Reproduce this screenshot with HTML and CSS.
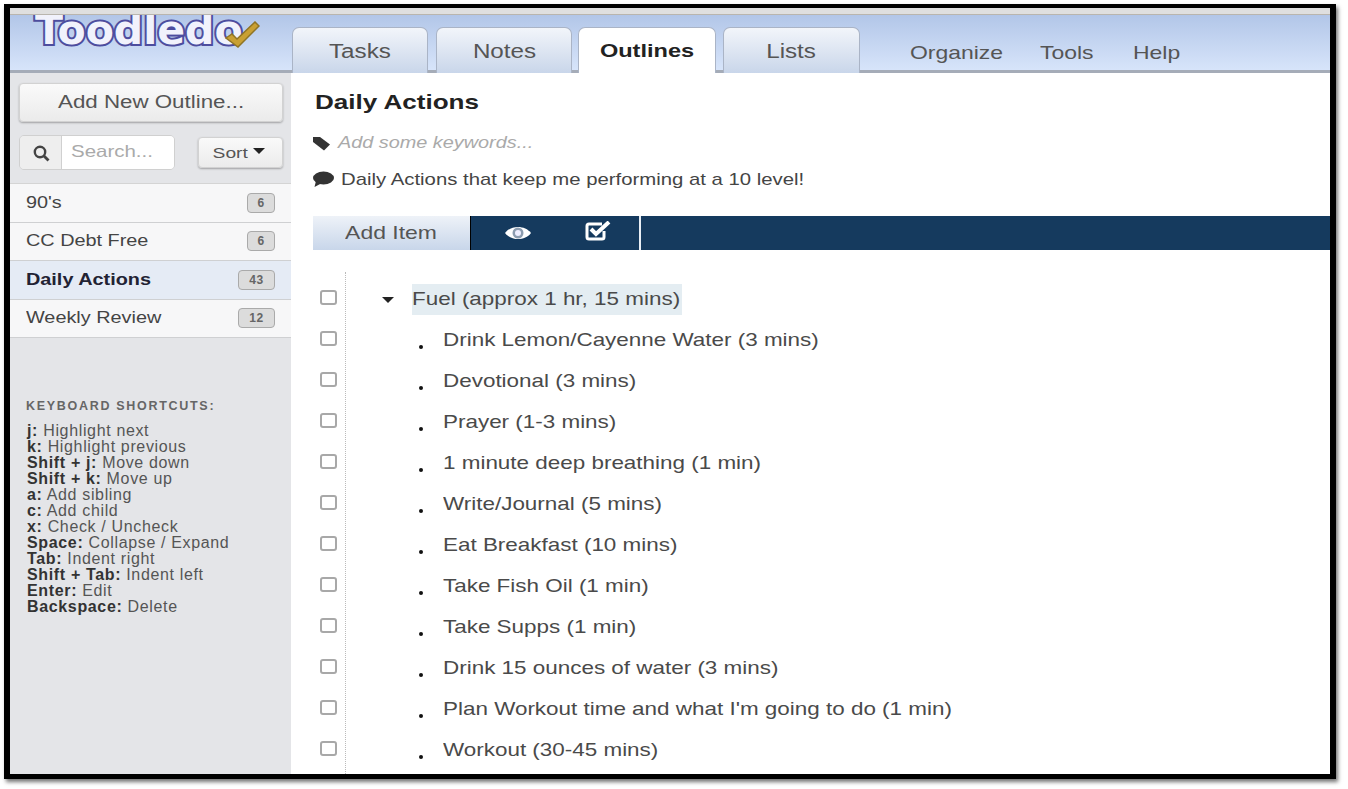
FILE: index.html
```html
<!DOCTYPE html>
<html lang="en">
<head>
<meta charset="utf-8">
<title>Toodledo Outlines</title>
<link rel="stylesheet" href="styles.css">
</head>
<body>
<div class="frame">
  <div class="strip"></div>
  <header class="topbar">
    <div class="logo">
      <span class="logo-text">Toodledo</span>
      <svg class="logo-check" width="36" height="30" viewBox="0 0 36 30"><path d="M2 17 L8 13 L13 18 L31 1 L35 5 L14 26 Z" fill="#c9a033" stroke="#8f7426" stroke-width="1.5"/></svg>
    </div>
    <nav class="tabs">
      <a class="tab tab-tasks"><span class="wide-c">Tasks</span></a>
      <a class="tab tab-notes"><span class="wide-c">Notes</span></a>
      <a class="tab tab-outlines active"><span class="wide-c">Outlines</span></a>
      <a class="tab tab-lists"><span class="wide-c">Lists</span></a>
    </nav>
    <nav class="menu">
      <a class="menu-organize"><span class="wide">Organize</span></a>
      <a class="menu-tools"><span class="wide">Tools</span></a>
      <a class="menu-help"><span class="wide">Help</span></a>
    </nav>
  </header>
  <div class="body">
    <aside class="side">
      <button class="btn add-btn"><span class="wide-c">Add New Outline...</span></button>
      <div class="search-row">
        <div class="search">
          <span class="search-icon"><svg width="18" height="18" viewBox="0 0 18 18"><circle cx="8" cy="8" r="5.2" fill="none" stroke="#444" stroke-width="2.4"/><path d="M12 12 L16.5 16.5" stroke="#444" stroke-width="2.8"/></svg></span>
          <span class="search-input"><span class="wide">Search...</span></span>
        </div>
        <button class="btn sort-btn"><span class="wide-c">Sort</span><i class="caret"></i></button>
      </div>
      <ul class="lists">
        <li class="list-row"><span class="wide">90's</span><b class="badge">6</b></li>
        <li class="list-row"><span class="wide">CC Debt Free</span><b class="badge">6</b></li>
        <li class="list-row current"><span class="wide">Daily Actions</span><b class="badge badge-2">43</b></li>
        <li class="list-row"><span class="wide">Weekly Review</span><b class="badge badge-2">12</b></li>
      </ul>
      <div class="shortcuts">
        <h4>KEYBOARD SHORTCUTS:</h4>
        <p><b>j:</b> Highlight next</p>
        <p><b>k:</b> Highlight previous</p>
        <p><b>Shift + j:</b> Move down</p>
        <p><b>Shift + k:</b> Move up</p>
        <p><b>a:</b> Add sibling</p>
        <p><b>c:</b> Add child</p>
        <p><b>x:</b> Check / Uncheck</p>
        <p><b>Space:</b> Collapse / Expand</p>
        <p><b>Tab:</b> Indent right</p>
        <p><b>Shift + Tab:</b> Indent left</p>
        <p><b>Enter:</b> Edit</p>
        <p><b>Backspace:</b> Delete</p>
      </div>
    </aside>
    <main class="main">
      <h1><span class="wide">Daily Actions</span></h1>
      <div class="keywords">
        <svg width="18" height="15" viewBox="0 0 18 15"><path d="M0 1 H7 L17 8.5 L11 14.5 L0 6 Z" fill="#333"/></svg>
        <span class="wide">Add some keywords...</span>
      </div>
      <div class="note">
        <svg width="21" height="16" viewBox="0 0 21 16"><ellipse cx="10.5" cy="7" rx="10.5" ry="6.5" fill="#333"/><path d="M3 10 L1.5 16 L9 12 Z" fill="#333"/></svg>
        <span class="wide">Daily Actions that keep me performing at a 10 level!</span>
      </div>
      <div class="toolbar">
        <div class="add-item"><span class="wide-c">Add Item</span></div>
        <div class="tool-icons">
          <svg width="28" height="18" viewBox="0 0 28 18"><path d="M1 9 C7 1 21 1 27 9 C21 17 7 17 1 9 Z" fill="#fff"/><circle cx="14" cy="9" r="5.5" fill="#8d9db0"/><circle cx="14" cy="9" r="3" fill="#eef"/></svg>
          <svg class="check-icon" width="28" height="20" viewBox="0 0 28 20"><path d="M20 10 V16 Q20 18 18 18 H5 Q3 18 3 16 V5 Q3 3 5 3 H18" fill="none" stroke="#fff" stroke-width="3"/><path d="M7 8 L12 13 L25 1" fill="none" stroke="#fff" stroke-width="4"/></svg>
        </div>
      </div>
      <div class="outline">
        <div class="row parent"><i class="check"></i><i class="arrow"></i><span class="fuel"><span class="wide">Fuel (approx 1 hr, 15 mins)</span></span></div>
        <div class="row"><i class="check"></i><i class="dot"></i><span class="wide">Drink Lemon/Cayenne Water (3 mins)</span></div>
        <div class="row"><i class="check"></i><i class="dot"></i><span class="wide">Devotional (3 mins)</span></div>
        <div class="row"><i class="check"></i><i class="dot"></i><span class="wide">Prayer (1-3 mins)</span></div>
        <div class="row"><i class="check"></i><i class="dot"></i><span class="wide">1 minute deep breathing (1 min)</span></div>
        <div class="row"><i class="check"></i><i class="dot"></i><span class="wide">Write/Journal (5 mins)</span></div>
        <div class="row"><i class="check"></i><i class="dot"></i><span class="wide">Eat Breakfast (10 mins)</span></div>
        <div class="row"><i class="check"></i><i class="dot"></i><span class="wide">Take Fish Oil (1 min)</span></div>
        <div class="row"><i class="check"></i><i class="dot"></i><span class="wide">Take Supps (1 min)</span></div>
        <div class="row"><i class="check"></i><i class="dot"></i><span class="wide">Drink 15 ounces of water (3 mins)</span></div>
        <div class="row"><i class="check"></i><i class="dot"></i><span class="wide">Plan Workout time and what I'm going to do (1 min)</span></div>
        <div class="row"><i class="check"></i><i class="dot"></i><span class="wide">Workout (30-45 mins)</span></div>
      </div>
    </main>
  </div>
</div>
</body>
</html>
```
FILE: styles.css
```css
* { box-sizing: border-box; }
html, body { margin: 0; height: 100%; background: #fff; overflow: hidden; }
body { font-family: "Liberation Sans", Arial, sans-serif; color: #444; padding: 4px 12px 10px 4px; }
.wide, .wide-c { display: inline-block; transform: scaleX(1.24); white-space: nowrap; }
.wide { transform-origin: left center; }
.wide-c { transform-origin: center; }

.frame {
  width: 1332px; height: 775px;
  border: solid #000; border-width: 4px 6px 5px 6px;
  box-shadow: 2px 3px 4px rgba(0,0,0,.55);
  background: #fff; display: flex; flex-direction: column; overflow: hidden;
}
.strip { height: 7px; background: #dfdfdf; border-bottom: 1px solid #b9b5ae; flex: none; }
.topbar {
  height: 58px; flex: none; display: flex; overflow: hidden;
  background: linear-gradient(#b2c6e8, #d9e6fb);
  box-shadow: inset 0 -3px 0 #a5acb8;
}
.logo { width: 282px; padding-left: 25px; flex: none; position: relative; }
.logo-text {
  display: block; font: bold 41px/1 "DejaVu Sans", sans-serif; margin-top: -5px;
  color: #f1f2fc; -webkit-text-stroke: 4px #4d4d9e; paint-order: stroke fill;
  transform: scaleX(1); transform-origin: left; white-space: nowrap;
}
.logo-check { position: absolute; left: 214px; top: 6px; }
.tabs { display: flex; gap: 8px; padding-top: 12px; width: 578px; flex: none; }
.tab {
  width: 136px; height: 46px; border: 1px solid #aab4c6; border-bottom: 0;
  border-radius: 7px 7px 0 0; background: linear-gradient(#f2f5fa, #c9d6ea);
  font-size: 19.5px; text-align: center; line-height: 46px; color: #555; flex: none;
}
.tab-notes { margin-right: -2px; }
.tab.active { background: #fff; color: #222; font-weight: bold; font-size: 19px; width: 138px; margin-right: -1px; }
.tab-lists { width: 137px; }
.menu { display: flex; padding: 27px 0 0 40px; font-size: 18.5px; color: #555; }
.menu a { display: block; }
.menu-organize { width: 130px; }
.menu-tools { width: 93px; }

.body { flex: 1; display: flex; min-height: 0; }
.side { width: 281px; flex: none; background: #e4e5e8; }
.btn {
  font: inherit; color: #555; background: linear-gradient(#fafafa, #ebebeb);
  border: 1px solid #d2d2d2; border-radius: 4px; box-shadow: 0 1px 2px rgba(0,0,0,.3); padding: 0;
}
.add-btn { display: block; width: 264px; height: 39px; margin: 10px 0 0 9px; font-size: 18px; }
.search-row { display: flex; align-items: center; margin: 13px 0 0 9px; height: 35px; }
.search { display: flex; width: 156px; height: 35px; border: 1px solid #d0d0d0; border-radius: 5px; overflow: hidden; }
.search-icon { width: 42px; flex: none; background: #eee; border-right: 1px solid #d0d0d0; display: flex; align-items: center; justify-content: center; }
.search-input { flex: 1; background: #fff; color: #aaa; font-size: 16.5px; padding-left: 9px; line-height: 31px; }
.sort-btn { width: 85px; height: 31px; margin-left: 23px; font-size: 15.5px; }
.caret { display: inline-block; width: 0; height: 0; border: 6px solid transparent; border-top-color: #222; border-bottom: 0; margin: 0 0 4px 9px; vertical-align: middle; }
.lists { list-style: none; margin: 13px 0 0; padding: 0; border-top: 1px solid #d4d4d4; }
.list-row {
  height: 38.5px; display: flex; align-items: center; justify-content: space-between;
  background: #f7f7f8; border-bottom: 1px solid #cfd0d2; padding: 0 16px; font-size: 16px; color: #444;
}
.list-row.current { background: #e5ebf5; color: #223; font-weight: bold; }
.badge {
  width: 28px; height: 20px; border: 1px solid #aaa; border-radius: 4px; background: #dcdcdc;
  font-size: 12px; line-height: 18px; text-align: center; color: #666; letter-spacing: .5px;
}
.badge-2 { width: 37px; }
.shortcuts { margin-top: 61px; padding-left: 16px; font-size: 16px; line-height: 16px; letter-spacing: .65px; color: #555; }
.shortcuts h4 { margin: 0 0 10px; font-size: 12.5px; line-height: 14px; letter-spacing: 1.7px; color: #666; font-weight: bold; white-space: nowrap; }
.shortcuts p { margin: 0 0 0 1px; white-space: nowrap; }
.shortcuts b { color: #333; }

.main { flex: 1; min-width: 0; display: flex; flex-direction: column; }
h1 { margin: 16px 0 0 24px; font-size: 21px; line-height: 26px; color: #222; flex: none; }
.keywords { display: flex; align-items: center; gap: 7px; margin: 16px 0 0 22px; height: 24px; font-size: 16px; font-style: italic; color: #aaa; flex: none; }
.note { display: flex; align-items: center; gap: 7px; margin: 12px 0 0 22px; height: 24px; font-size: 16.4px; color: #444; flex: none; }
.toolbar { display: flex; margin: 25px 0 0 22px; height: 34px; background: #153a5e; flex: none; }
.add-item { width: 158px; background: linear-gradient(#eef2f8, #c8d6ea); font-size: 18.5px; line-height: 33px; text-align: center; color: #555; border-right: 1px solid #000; }
.tool-icons { width: 170px; display: flex; gap: 52px; padding-left: 33px; align-items: center; border-right: 2px solid #e8eef5; height: 34px; }
.check-icon { margin-top: -4px; }
.outline { flex: 1; position: relative; margin: 22px 0 0 29px; padding-top: 6px; overflow: hidden; }
.outline::before { content: ""; position: absolute; left: 25px; top: 0; bottom: 0; border-left: 1px dotted #bbb; }
.row { height: 41px; display: flex; align-items: center; font-size: 18.1px; color: #4a4a4a; padding-top: 1px; }
.check { width: 17px; height: 15px; border: 2px solid #a8a8a8; border-radius: 3px; flex: none; margin-top: -4px; }
.arrow { width: 0; height: 0; border: 6px solid transparent; border-top-color: #222; border-bottom: 0; margin: 1px 0 0 45px; flex: none; }
.fuel { margin-left: 18px; background: #e4edf2; height: 31px; line-height: 31px; width: 270px; }
.dot { width: 4px; height: 4px; border-radius: 50%; background: #111; flex: none; margin: 14px 20px 0 82px; }
```
